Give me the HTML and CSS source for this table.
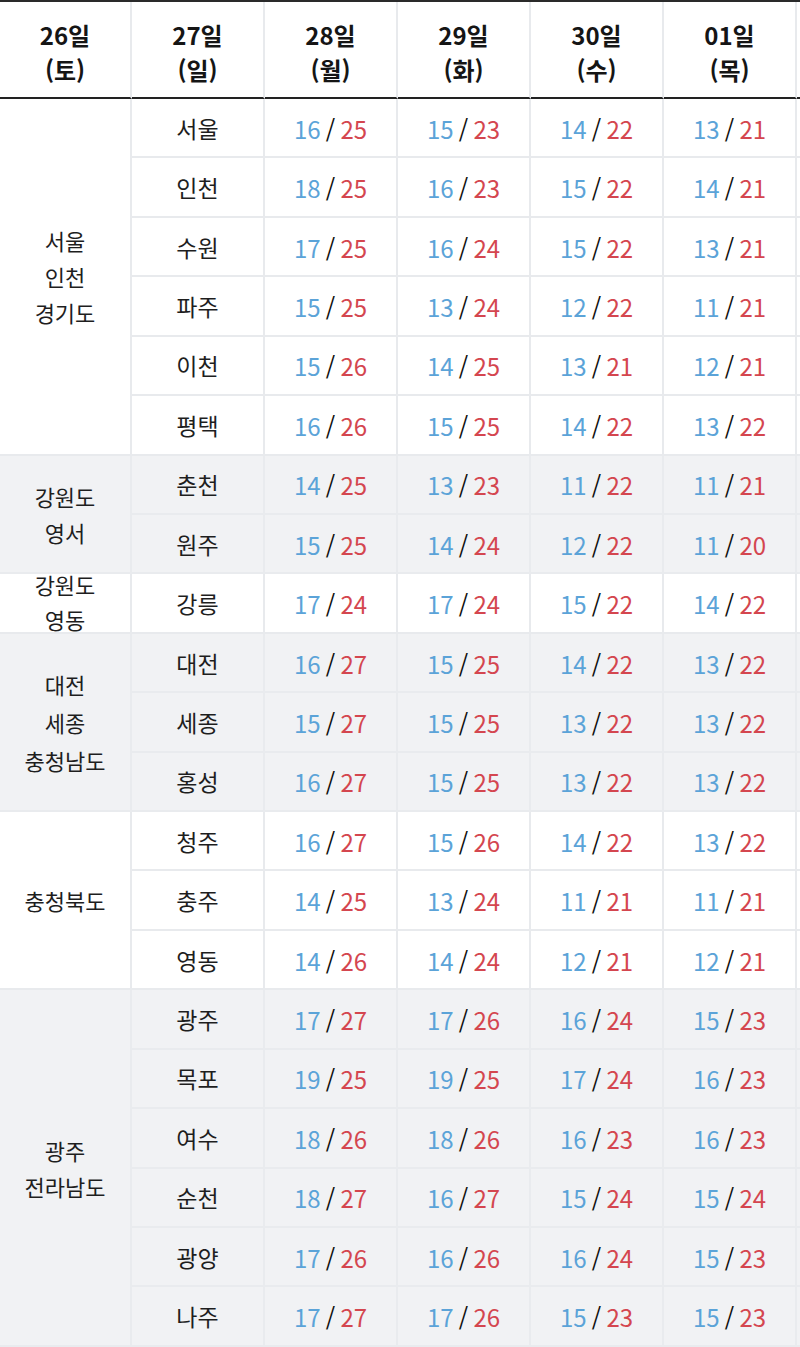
FILE: index.html
```html
<!DOCTYPE html>
<html lang="ko">
<head>
<meta charset="utf-8">
<link rel="stylesheet" href="styles.css">
</head>
<body>
<div class="table">
  <div class="hd">26일<br>(토)</div>
  <div class="hd">27일<br>(일)</div>
  <div class="hd">28일<br>(월)</div>
  <div class="hd">29일<br>(화)</div>
  <div class="hd">30일<br>(수)</div>
  <div class="hd">01일<br>(목)</div>
  <div class="hd edge"></div>

  <div class="grp span6">서울<br>인천<br>경기도</div>
  <div class="city">서울</div><div class="t"><span><b>16</b> / <i>25</i></span></div><div class="t"><span><b>15</b> / <i>23</i></span></div><div class="t"><span><b>14</b> / <i>22</i></span></div><div class="t"><span><b>13</b> / <i>21</i></span></div><div class="edge"></div>
  <div class="city">인천</div><div class="t"><span><b>18</b> / <i>25</i></span></div><div class="t"><span><b>16</b> / <i>23</i></span></div><div class="t"><span><b>15</b> / <i>22</i></span></div><div class="t"><span><b>14</b> / <i>21</i></span></div><div class="edge"></div>
  <div class="city">수원</div><div class="t"><span><b>17</b> / <i>25</i></span></div><div class="t"><span><b>16</b> / <i>24</i></span></div><div class="t"><span><b>15</b> / <i>22</i></span></div><div class="t"><span><b>13</b> / <i>21</i></span></div><div class="edge"></div>
  <div class="city">파주</div><div class="t"><span><b>15</b> / <i>25</i></span></div><div class="t"><span><b>13</b> / <i>24</i></span></div><div class="t"><span><b>12</b> / <i>22</i></span></div><div class="t"><span><b>11</b> / <i>21</i></span></div><div class="edge"></div>
  <div class="city">이천</div><div class="t"><span><b>15</b> / <i>26</i></span></div><div class="t"><span><b>14</b> / <i>25</i></span></div><div class="t"><span><b>13</b> / <i>21</i></span></div><div class="t"><span><b>12</b> / <i>21</i></span></div><div class="edge"></div>
  <div class="city">평택</div><div class="t"><span><b>16</b> / <i>26</i></span></div><div class="t"><span><b>15</b> / <i>25</i></span></div><div class="t"><span><b>14</b> / <i>22</i></span></div><div class="t"><span><b>13</b> / <i>22</i></span></div><div class="edge"></div>

  <div class="grp g span2">강원도<br>영서</div>
  <div class="city g">춘천</div><div class="t g"><span><b>14</b> / <i>25</i></span></div><div class="t g"><span><b>13</b> / <i>23</i></span></div><div class="t g"><span><b>11</b> / <i>22</i></span></div><div class="t g"><span><b>11</b> / <i>21</i></span></div><div class="edge g"></div>
  <div class="city g">원주</div><div class="t g"><span><b>15</b> / <i>25</i></span></div><div class="t g"><span><b>14</b> / <i>24</i></span></div><div class="t g"><span><b>12</b> / <i>22</i></span></div><div class="t g"><span><b>11</b> / <i>20</i></span></div><div class="edge g"></div>

  <div class="grp tight">강원도<br>영동</div>
  <div class="city">강릉</div><div class="t"><span><b>17</b> / <i>24</i></span></div><div class="t"><span><b>17</b> / <i>24</i></span></div><div class="t"><span><b>15</b> / <i>22</i></span></div><div class="t"><span><b>14</b> / <i>22</i></span></div><div class="edge"></div>

  <div class="grp g span3 wide">대전<br>세종<br>충청남도</div>
  <div class="city g">대전</div><div class="t g"><span><b>16</b> / <i>27</i></span></div><div class="t g"><span><b>15</b> / <i>25</i></span></div><div class="t g"><span><b>14</b> / <i>22</i></span></div><div class="t g"><span><b>13</b> / <i>22</i></span></div><div class="edge g"></div>
  <div class="city g">세종</div><div class="t g"><span><b>15</b> / <i>27</i></span></div><div class="t g"><span><b>15</b> / <i>25</i></span></div><div class="t g"><span><b>13</b> / <i>22</i></span></div><div class="t g"><span><b>13</b> / <i>22</i></span></div><div class="edge g"></div>
  <div class="city g">홍성</div><div class="t g"><span><b>16</b> / <i>27</i></span></div><div class="t g"><span><b>15</b> / <i>25</i></span></div><div class="t g"><span><b>13</b> / <i>22</i></span></div><div class="t g"><span><b>13</b> / <i>22</i></span></div><div class="edge g"></div>

  <div class="grp span3">충청북도</div>
  <div class="city">청주</div><div class="t"><span><b>16</b> / <i>27</i></span></div><div class="t"><span><b>15</b> / <i>26</i></span></div><div class="t"><span><b>14</b> / <i>22</i></span></div><div class="t"><span><b>13</b> / <i>22</i></span></div><div class="edge"></div>
  <div class="city">충주</div><div class="t"><span><b>14</b> / <i>25</i></span></div><div class="t"><span><b>13</b> / <i>24</i></span></div><div class="t"><span><b>11</b> / <i>21</i></span></div><div class="t"><span><b>11</b> / <i>21</i></span></div><div class="edge"></div>
  <div class="city">영동</div><div class="t"><span><b>14</b> / <i>26</i></span></div><div class="t"><span><b>14</b> / <i>24</i></span></div><div class="t"><span><b>12</b> / <i>21</i></span></div><div class="t"><span><b>12</b> / <i>21</i></span></div><div class="edge"></div>

  <div class="grp g span6">광주<br>전라남도</div>
  <div class="city g">광주</div><div class="t g"><span><b>17</b> / <i>27</i></span></div><div class="t g"><span><b>17</b> / <i>26</i></span></div><div class="t g"><span><b>16</b> / <i>24</i></span></div><div class="t g"><span><b>15</b> / <i>23</i></span></div><div class="edge g"></div>
  <div class="city g">목포</div><div class="t g"><span><b>19</b> / <i>25</i></span></div><div class="t g"><span><b>19</b> / <i>25</i></span></div><div class="t g"><span><b>17</b> / <i>24</i></span></div><div class="t g"><span><b>16</b> / <i>23</i></span></div><div class="edge g"></div>
  <div class="city g">여수</div><div class="t g"><span><b>18</b> / <i>26</i></span></div><div class="t g"><span><b>18</b> / <i>26</i></span></div><div class="t g"><span><b>16</b> / <i>23</i></span></div><div class="t g"><span><b>16</b> / <i>23</i></span></div><div class="edge g"></div>
  <div class="city g">순천</div><div class="t g"><span><b>18</b> / <i>27</i></span></div><div class="t g"><span><b>16</b> / <i>27</i></span></div><div class="t g"><span><b>15</b> / <i>24</i></span></div><div class="t g"><span><b>15</b> / <i>24</i></span></div><div class="edge g"></div>
  <div class="city g">광양</div><div class="t g"><span><b>17</b> / <i>26</i></span></div><div class="t g"><span><b>16</b> / <i>26</i></span></div><div class="t g"><span><b>16</b> / <i>24</i></span></div><div class="t g"><span><b>15</b> / <i>23</i></span></div><div class="edge g"></div>
  <div class="city g">나주</div><div class="t g"><span><b>17</b> / <i>27</i></span></div><div class="t g"><span><b>17</b> / <i>26</i></span></div><div class="t g"><span><b>15</b> / <i>23</i></span></div><div class="t g"><span><b>15</b> / <i>23</i></span></div><div class="edge g"></div>
</div>
</body>
</html>
```

FILE: styles.css
```css
html, body {
  margin: 0;
  padding: 0;
  background: #ffffff;
}

body {
  width: 800px;
  overflow: hidden;
  font-family: "Noto Sans CJK KR", "Noto Sans", sans-serif;
  color: #1e1e1e;
}

.table {
  display: grid;
  grid-template-columns: 132px 133px 133px 133px 133px 133px 1fr;
  grid-template-rows: 97px;
  grid-auto-rows: 59.43px;
  border-top: 2px solid #2a2a2a;
}

.table > div {
  box-sizing: border-box;
  border-right: 2px solid #e8eaed;
  border-bottom: 2px solid #e8eaed;
  display: flex;
  align-items: center;
  justify-content: center;
  text-align: center;
  font-size: 23px;
  background: #ffffff;
}

.table > .hd {
  font-size: 24px;
  font-weight: 700;
  line-height: 35px;
  color: #151515;
  border-bottom: 2px solid #222222;
  padding-top: 4px;
}

.table > .g {
  background: #f1f2f4;
  border-color: #e9ebee;
}

.table > .grp {
  grid-column: 1;
  line-height: 36px;
  font-size: 22px;
}

.table > .grp.wide {
  line-height: 38px;
}

.table > .grp.tight {
  line-height: 35px;
  padding-bottom: 2px;
}

.span2 { grid-row: span 2; }
.span3 { grid-row: span 3; }
.span6 { grid-row: span 6; }

.table > .t {
  color: #0e0e0e;
  font-size: 24px;
  padding-top: 1px;
  word-spacing: -1.5px;
}

.t b {
  font-weight: 400;
  color: #5ba3d8;
}

.t i {
  font-style: normal;
  color: #d4464f;
}

.table > .edge {
  border-right: none;
}
```
